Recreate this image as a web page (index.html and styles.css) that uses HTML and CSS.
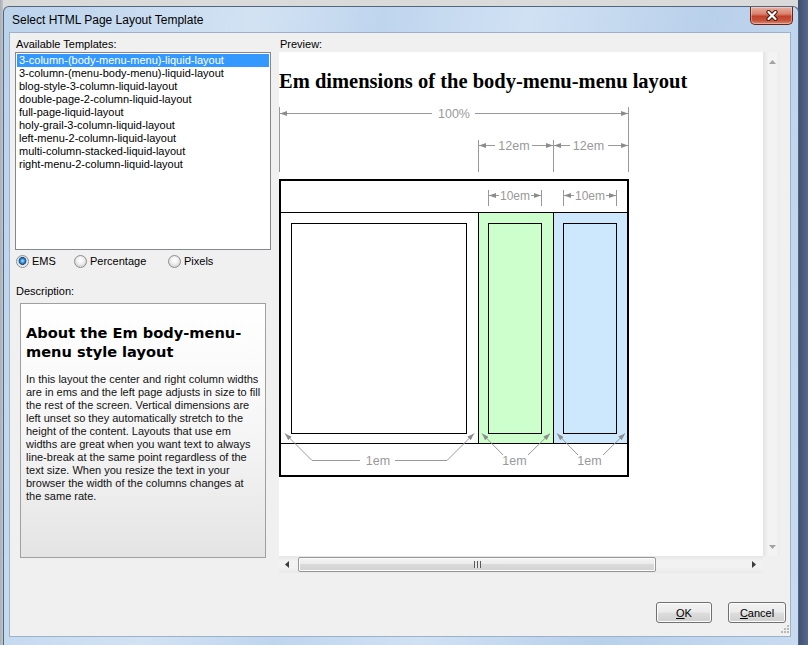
FILE: index.html
```html
<!DOCTYPE html>
<html>
<head>
<meta charset="utf-8">
<title>Select HTML Page Layout Template</title>
<link rel="stylesheet" href="styles.css">
</head>
<body>
<div class="desktop">
  <div class="window">
    <div class="titlebar">
      <span class="title">Select HTML Page Layout Template</span>
      <div class="close">
        <svg width="14" height="11" viewBox="0 0 14 11"><path d="M3.5 2 L10.5 9 M10.5 2 L3.5 9" stroke="#4a160c" stroke-width="4.2" stroke-linecap="round"/><path d="M3.5 2 L10.5 9 M10.5 2 L3.5 9" stroke="#ffffff" stroke-width="2.2" stroke-linecap="round"/></svg>
      </div>
    </div>
    <div class="client">
      <div class="main">
        <div class="leftcol">
          <div class="label">Available Templates:</div>
          <ul class="list">
            <li class="sel">3-column-(body-menu-menu)-liquid-layout</li>
            <li>3-column-(menu-body-menu)-liquid-layout</li>
            <li>blog-style-3-column-liquid-layout</li>
            <li>double-page-2-column-liquid-layout</li>
            <li>full-page-liquid-layout</li>
            <li>holy-grail-3-column-liquid-layout</li>
            <li>left-menu-2-column-liquid-layout</li>
            <li>multi-column-stacked-liquid-layout</li>
            <li>right-menu-2-column-liquid-layout</li>
          </ul>
          <div class="radios">
            <div class="radio-item r1"><span class="radio on"></span><span>EMS</span></div>
            <div class="radio-item r2"><span class="radio"></span><span>Percentage</span></div>
            <div class="radio-item r3"><span class="radio"></span><span>Pixels</span></div>
          </div>
          <div class="label desc-label">Description:</div>
          <div class="desc">
            <h2 class="desc-title">About the Em body-menu-<br>menu style layout</h2>
            <p class="desc-text">In this layout the center and right column widths<br>are in ems and the left page adjusts in size to fill<br>the rest of the screen. Vertical dimensions are<br>left unset so they automatically stretch to the<br>height of the content. Layouts that use em<br>widths are great when you want text to always<br>line-break at the same point regardless of the<br>text size. When you resize the text in your<br>browser the width of the columns changes at<br>the same rate.</p>
          </div>
        </div>
        <div class="rightcol">
          <div class="label">Preview:</div>
          <div class="preview">
            <div class="pv-view">
              <h1 class="pv-title">Em dimensions of the body-menu-menu layout</h1>
              <svg class="diagram" width="352" height="374" viewBox="0 0 352 374">
                <defs>
                  <marker id="ah" viewBox="0 0 7 5" refX="7" refY="2.5" markerWidth="7" markerHeight="5" markerUnits="userSpaceOnUse" orient="auto-start-reverse">
                    <path d="M0,0 L7,2.5 L0,5 z" fill="#8c8c8c"/>
                  </marker>
                </defs>
                <rect x="199.5" y="106.5" width="75" height="231" fill="#ccffcc"/>
                <rect x="274.5" y="106.5" width="74" height="231" fill="#cde7fc"/>
                <path d="M0.5 1 V66 M349.5 1 V66 M199.5 34 V66 M274.5 34 V66" stroke="#999" stroke-width="1" fill="none"/>
                <path d="M1 7.5 H153" stroke="#999" fill="none" marker-start="url(#ah)"/>
                <path d="M196 7.5 H349" stroke="#999" fill="none" marker-end="url(#ah)"/>
                <text x="175" y="12" class="dim">100%</text>
                <path d="M200 39.5 H216" stroke="#999" fill="none" marker-start="url(#ah)"/>
                <path d="M253 39.5 H274" stroke="#999" fill="none" marker-end="url(#ah)"/>
                <text x="235" y="44" class="dim">12em</text>
                <path d="M275 39.5 H291" stroke="#999" fill="none" marker-start="url(#ah)"/>
                <path d="M329 39.5 H349" stroke="#999" fill="none" marker-end="url(#ah)"/>
                <text x="309.5" y="44" class="dim">12em</text>
                <rect x="1" y="74" width="348" height="296" fill="none" stroke="#000" stroke-width="2"/>
                <path d="M2 106.5 H348 M2 337.5 H348 M199.5 106.5 V337.5 M274.5 106.5 V337.5" stroke="#000" stroke-width="1" fill="none"/>
                <rect x="12.5" y="117.5" width="175" height="210" fill="#fff" stroke="#000"/>
                <rect x="209.5" y="117.5" width="53" height="210" fill="none" stroke="#000"/>
                <rect x="284.5" y="117.5" width="53" height="210" fill="none" stroke="#000"/>
                <path d="M209.5 84 V100 M262.5 84 V100 M284.5 84 V100 M337.5 84 V100" stroke="#999" fill="none"/>
                <path d="M210 89.5 H220" stroke="#999" fill="none" marker-start="url(#ah)"/>
                <path d="M252 89.5 H262" stroke="#999" fill="none" marker-end="url(#ah)"/>
                <text x="236" y="94" class="dim mid">10em</text>
                <path d="M285 89.5 H295" stroke="#999" fill="none" marker-start="url(#ah)"/>
                <path d="M327 89.5 H337" stroke="#999" fill="none" marker-end="url(#ah)"/>
                <text x="311" y="94" class="dim mid">10em</text>
                <path d="M81 354.5 H33 L6 327.5" stroke="#999" fill="none" marker-end="url(#ah)"/>
                <path d="M116 354.5 H168 L195 327.5" stroke="#999" fill="none" marker-end="url(#ah)"/>
                <text x="99" y="359" class="dim">1em</text>
                <path d="M224 349 L203 327.5" stroke="#999" fill="none" marker-end="url(#ah)"/>
                <path d="M249 349 L271 327.5" stroke="#999" fill="none" marker-end="url(#ah)"/>
                <text x="235.5" y="359" class="dim">1em</text>
                <path d="M299 349 L278 327.5" stroke="#999" fill="none" marker-end="url(#ah)"/>
                <path d="M324 349 L346 327.5" stroke="#999" fill="none" marker-end="url(#ah)"/>
                <text x="310.5" y="359" class="dim">1em</text>
              </svg>
            </div>
            <div class="vscroll">
              <svg width="7" height="4" viewBox="0 0 7 4"><path d="M0 4 L3.5 0 L7 4 z" fill="#a3a3a3"/></svg>
              <svg width="7" height="4" viewBox="0 0 7 4"><path d="M0 0 L3.5 4 L7 0 z" fill="#a3a3a3"/></svg>
            </div>
            <div class="hscroll">
              <svg class="harrow" width="4" height="7" viewBox="0 0 4 7"><path d="M4 0 L0 3.5 L4 7 z" fill="#3c3c3c"/></svg>
              <div class="thumb"><span class="grip-lines"></span></div>
              <svg class="harrow right" width="4" height="7" viewBox="0 0 4 7"><path d="M0 0 L4 3.5 L0 7 z" fill="#3c3c3c"/></svg>
            </div>
            <div class="corner"></div>
          </div>
        </div>
      </div>
      <div class="buttons">
        <div class="btn ok"><u>O</u>K</div>
        <div class="btn cancel"><u>C</u>ancel</div>
      </div>
      <svg class="grip" width="9" height="9" viewBox="0 0 9 9">
        <rect x="7" y="1" width="2" height="2" fill="#b8b8b8"/>
        <rect x="4" y="4" width="2" height="2" fill="#b8b8b8"/>
        <rect x="7" y="4" width="2" height="2" fill="#b8b8b8"/>
        <rect x="1" y="7" width="2" height="2" fill="#b8b8b8"/>
        <rect x="4" y="7" width="2" height="2" fill="#b8b8b8"/>
        <rect x="7" y="7" width="2" height="2" fill="#b8b8b8"/>
      </svg>
    </div>
  </div>
</div>
</body>
</html>
```

FILE: styles.css
```css
* { box-sizing: border-box; }

body {
  margin: 0;
  font-family: "Liberation Sans", Arial, sans-serif;
  color: #000;
}

.desktop {
  width: 808px;
  height: 645px;
  overflow: hidden;
  padding: 6px 0 0 3px;
  background:
    linear-gradient(to right, transparent 798px, #3f4f70 798px, #56688a 808px),
    linear-gradient(to right, #a9aeb7 0, #c2c6cc 3px, transparent 3px),
    #dadada;
}

.window {
  width: 796px;
  height: 639px;
  border: 1px solid #53667f;
  border-bottom: none;
  border-radius: 6px 6px 0 0;
  padding: 0 7px 7px 5px;
  display: flex;
  flex-direction: column;
  background: linear-gradient(100deg, #bcd3ec 0%, #d2e2f3 28%, #bfd5ee 42%, #d0e1f3 58%, #b9d0eb 78%, #c8dbf0 100%);
}

.titlebar {
  height: 25px;
  display: flex;
  justify-content: space-between;
  align-items: flex-start;
}

.title {
  font-size: 12px;
  line-height: 14px;
  margin: 6px 0 0 3px;
  color: #000;
}

.close {
  width: 43px;
  height: 18px;
  margin-right: -2px;
  border: 1px solid #6a2217;
  border-top: none;
  border-radius: 0 0 5px 5px;
  background: linear-gradient(#e9b1a3 0%, #d98470 40%, #c2412b 55%, #c8543c 80%, #de8a6f 100%);
  display: flex;
  align-items: center;
  justify-content: center;
  box-shadow: inset 0 0 0 1px rgba(255,255,255,0.35);
}

.client {
  position: relative;
  width: 782px;
  height: 605px;
  background: #f0f0f0;
  border: 1px solid #9db1cb;
  display: flex;
  flex-direction: column;
}

.main {
  display: flex;
  height: 569px;
}

.leftcol {
  margin-left: 5px;
  width: 256px;
  padding-top: 4px;
}

.label {
  font-size: 11px;
  line-height: 15px;
  height: 15px;
  padding-left: 1px;
  white-space: nowrap;
}

.list {
  margin: 0;
  padding: 1px;
  list-style: none;
  height: 198px;
  background: #fff;
  border: 1px solid #828790;
}

.list li {
  font-size: 11px;
  line-height: 13px;
  height: 13px;
  padding-left: 2px;
  white-space: nowrap;
}

.list li.sel {
  background: #3399ff;
  color: #fff;
}

.radios {
  display: flex;
  align-items: center;
  height: 14px;
  margin-top: 4px;
  padding-left: 1px;
  font-size: 11px;
}

.radio-item {
  display: flex;
  align-items: center;
  gap: 3px;
}

.r1 { width: 58px; }
.r2 { width: 94px; }

.radio {
  width: 13px;
  height: 13px;
  border-radius: 50%;
  border: 1px solid #8e8f8f;
  background: radial-gradient(circle at 50% 40%, #ffffff 0, #f4f4f4 3px, #d8d8d8 6px);
}

.radio.on {
  background: radial-gradient(circle at 50% 45%, #b9eaff 0, #4aa6e8 1.6px, #1d63b0 3px, #154b86 3.6px, #dcdcdc 4.2px, #f6f6f6 6px);
}

.desc-label {
  margin-top: 16px;
  height: 14px;
  line-height: 14px;
}

.desc {
  margin: 5px 0 0 5px;
  width: 246px;
  height: 255px;
  border: 1px solid #a0a0a0;
  background: linear-gradient(#ffffff 0%, #f6f6f6 50%, #e4e4e4 100%);
  padding: 19px 0 0 5px;
}

.desc-title {
  margin: 0;
  font-family: "DejaVu Sans", Verdana, sans-serif;
  font-weight: bold;
  font-size: 14.6px;
  line-height: 19px;
  white-space: nowrap;
}

.desc-text {
  margin: 12px 0 0 0;
  font-size: 11px;
  line-height: 13px;
  white-space: nowrap;
  color: #111;
}

.rightcol {
  margin-left: 8px;
  width: 501px;
  padding-top: 4px;
}

.preview {
  display: grid;
  grid-template-columns: 484px 17px;
  grid-template-rows: 504px 17px;
  width: 501px;
  height: 521px;
}

.pv-view {
  background: #fff;
  overflow: hidden;
}

.pv-title {
  margin: 0;
  padding-top: 17px;
  font-family: "Liberation Serif", "Times New Roman", serif;
  font-weight: bold;
  font-size: 20.5px;
  line-height: 24px;
  white-space: nowrap;
}

.diagram {
  display: block;
  margin-top: 13px;
}

.dim {
  font-family: "Liberation Sans", Arial, sans-serif;
  font-size: 12.5px;
  fill: #999;
  text-anchor: middle;
}

.dim.mid {
  font-size: 12px;
}

.vscroll {
  display: flex;
  flex-direction: column;
  justify-content: space-between;
  align-items: center;
  padding: 8px 0 7px 1px;
  background: linear-gradient(to right, #e6e6e6, #f3f3f3 25%, #f3f3f3 75%, #ebebeb);
  border-left: 1px solid #e4e4e4;
}

.hscroll {
  display: flex;
  align-items: center;
  padding: 0 0 0 6px;
  background: linear-gradient(#e6e6e6, #f2f2f2 30%, #f2f2f2 70%, #e9e9e9);
}

.harrow { flex: none; }

.harrow.right { margin-left: 96px; }

.thumb {
  width: 358px;
  height: 15px;
  margin-left: 9px;
  border: 1px solid #979797;
  border-radius: 2px;
  background: linear-gradient(#f4f4f4 0%, #ececec 45%, #dadada 50%, #d2d2d2 100%);
  box-shadow: inset 0 0 0 1px #fbfbfb;
  display: flex;
  align-items: center;
  justify-content: center;
}

.grip-lines {
  width: 7px;
  height: 7px;
  background: repeating-linear-gradient(to right, #5a5a5a 0 1px, #e8e8e8 1px 3px);
}

.corner {
  background: #f0f0f0;
}

.buttons {
  display: flex;
  justify-content: flex-end;
  gap: 16px;
  padding-right: 4px;
}

.btn {
  height: 21px;
  border: 1px solid #707070;
  border-radius: 3px;
  background: linear-gradient(#f2f2f2 0%, #ebebeb 48%, #dddddd 52%, #cfcfcf 100%);
  box-shadow: inset 0 0 0 1px #fcfcfc;
  font-size: 11px;
  display: flex;
  align-items: center;
  justify-content: center;
}

.btn u { text-underline-offset: 1px; }

.ok { width: 56px; }
.cancel { width: 58px; }

.grip {
  position: absolute;
  right: 1px;
  bottom: 3px;
}
```
